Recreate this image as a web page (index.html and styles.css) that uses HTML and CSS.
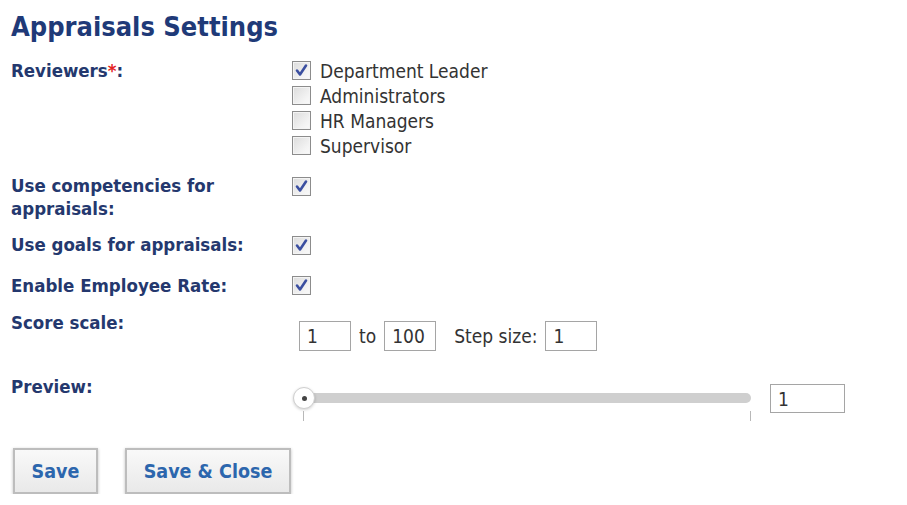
FILE: index.html
```html
<!DOCTYPE html>
<html>
<head>
<meta charset="utf-8">
<link rel="stylesheet" href="styles.css">
</head>
<body>
<div class="page">
  <h1 class="title">Appraisals Settings</h1>
  <div class="form">
    <div class="row row-reviewers">
      <div class="label">Reviewers<span class="req">*</span>:</div>
      <div class="value">
        <ul class="checklist">
          <li><span class="cb checked"><svg viewBox="0 0 19 19" width="19" height="19"><path d="M5 9.5 L8 13.5 L14 4.5" fill="none" stroke="#3b4fa0" stroke-width="2.6" stroke-linecap="round" stroke-linejoin="round"/></svg></span><span class="cb-text">Department Leader</span></li>
          <li><span class="cb"></span><span class="cb-text">Administrators</span></li>
          <li><span class="cb"></span><span class="cb-text">HR Managers</span></li>
          <li><span class="cb"></span><span class="cb-text">Supervisor</span></li>
        </ul>
      </div>
    </div>
    <div class="row row-comp">
      <div class="label">Use competencies for appraisals:</div>
      <div class="value"><span class="cb checked"><svg viewBox="0 0 19 19" width="19" height="19"><path d="M5 9.5 L8 13.5 L14 4.5" fill="none" stroke="#3b4fa0" stroke-width="2.6" stroke-linecap="round" stroke-linejoin="round"/></svg></span></div>
    </div>
    <div class="row row-goals">
      <div class="label">Use goals for appraisals:</div>
      <div class="value"><span class="cb checked"><svg viewBox="0 0 19 19" width="19" height="19"><path d="M5 9.5 L8 13.5 L14 4.5" fill="none" stroke="#3b4fa0" stroke-width="2.6" stroke-linecap="round" stroke-linejoin="round"/></svg></span></div>
    </div>
    <div class="row row-rate">
      <div class="label">Enable Employee Rate:</div>
      <div class="value"><span class="cb checked"><svg viewBox="0 0 19 19" width="19" height="19"><path d="M5 9.5 L8 13.5 L14 4.5" fill="none" stroke="#3b4fa0" stroke-width="2.6" stroke-linecap="round" stroke-linejoin="round"/></svg></span></div>
    </div>
    <div class="row row-score">
      <div class="label">Score scale:</div>
      <div class="value score">
        <span class="box">1</span>
        <span class="txt">to</span>
        <span class="box">100</span>
        <span class="txt step">Step size:</span>
        <span class="box">1</span>
      </div>
    </div>
    <div class="row row-preview">
      <div class="label">Preview:</div>
      <div class="value preview">
        <div class="slider">
          <div class="track"></div>
          <div class="handle"><span class="dot"></span></div>
          <div class="tick tick-start"></div>
          <div class="tick tick-end"></div>
        </div>
        <span class="box box-wide">1</span>
      </div>
    </div>
  </div>
  <div class="buttons">
    <button class="btn btn-save">Save</button>
    <button class="btn btn-close">Save &amp; Close</button>
  </div>
</div>
</body>
</html>
```

FILE: styles.css
```css
* { box-sizing: border-box; }
html, body { margin: 0; padding: 0; background: #fff; }
body {
  font-family: "DejaVu Sans Condensed", "DejaVu Sans", sans-serif;
  color: #333;
}
.page { padding: 9px 0 0 11px; width: 907px; }
.title {
  margin: 0;
  font-size: 27px;
  font-weight: bold;
  line-height: 36px;
  color: #1f3a78;
}
.form { margin-top: 14px; }
.row {
  display: grid;
  grid-template-columns: 281px 1fr;
  align-items: start;
}
.label {
  font-size: 18.5px;
  font-weight: bold;
  color: #24386e;
  line-height: 23px;
  padding-right: 20px;
}
.row-comp .label { margin-top: -2px; }
.row-goals .label { margin-top: -3px; }
.req { color: #e52222; }
.checklist { list-style: none; margin: 0; padding: 0; }
.checklist li {
  display: flex;
  align-items: center;
  height: 25px;
}
.cb {
  display: inline-block;
  width: 19px;
  height: 19px;
  border: 1px solid #8c8c8c;
  box-shadow: inset 0 0 0 1px #f4f4f4;
  background: linear-gradient(135deg, #dcdcdc 0%, #f3f3f3 70%, #fafafa 100%);
  position: relative;
  flex: none;
}
.cb svg { position: absolute; left: -1px; top: -1px; }
.cb-text {
  margin-left: 9px;
  font-size: 19px;
  color: #333;
  line-height: 22px;
}
.row-reviewers .value { margin-top: -1px; }
.row-comp { margin-top: 18px; }
.row-comp .value { padding-top: 1px; }
.row-goals { margin-top: 16px; }
.row-goals .value { padding-top: 0; }
.row-rate { margin-top: 15px; }
.row-rate .value { padding-top: 2px; }
.row-score { margin-top: 12px; }
.score {
  display: flex;
  align-items: center;
  padding-top: 10px;
  padding-left: 7px;
}
.box {
  display: inline-flex;
  align-items: center;
  width: 52px;
  height: 30px;
  border: 1px solid #a5a5a5;
  padding-left: 7px;
  font-size: 19px;
  color: #333;
  background: #fff;
}
.txt { font-size: 19px; color: #333; margin: 0 8px; }
.txt.step { margin-left: 18px; }
.row-preview { margin-top: 24px; }
.preview {
  display: flex;
  align-items: flex-start;
  padding-top: 9px;
}
.slider {
  position: relative;
  width: 478px;
  height: 34px;
  margin-top: 3px;
}
.track {
  position: absolute;
  left: 11px;
  top: 6px;
  width: 448px;
  height: 10px;
  border-radius: 5px;
  background: #cfcfcf;
}
.handle {
  position: absolute;
  left: 1px;
  top: 0;
  width: 22px;
  height: 22px;
  border-radius: 50%;
  background: #fff;
  border: 1px solid #cfcfcf;
  box-shadow: 0 1px 3px rgba(0,0,0,0.18);
  display: flex;
  align-items: center;
  justify-content: center;
}
.dot { width: 5px; height: 5px; border-radius: 50%; background: #444; }
.tick {
  position: absolute;
  top: 24px;
  width: 1px;
  height: 10px;
  background: #b8b8b8;
}
.tick-start { left: 11px; }
.tick-end { left: 458px; }
.box-wide { width: 75px; height: 29px; margin-top: 0; }
.buttons {
  display: flex;
  gap: 27px;
  margin-top: 27px;
  padding-left: 2px;
}
.btn {
  height: 46px;
  border: 2px solid #bdbdbd;
  background: linear-gradient(#f9f9f9, #e9e9e9);
  box-shadow: 0 1px 3px rgba(0,0,0,0.25);
  font-family: "DejaVu Sans Condensed", "DejaVu Sans", sans-serif;
  font-size: 19.5px;
  font-weight: bold;
  color: #2c66ad;
  padding: 0;
}
.btn-save { width: 85px; }
.btn-close { width: 166px; }
```
